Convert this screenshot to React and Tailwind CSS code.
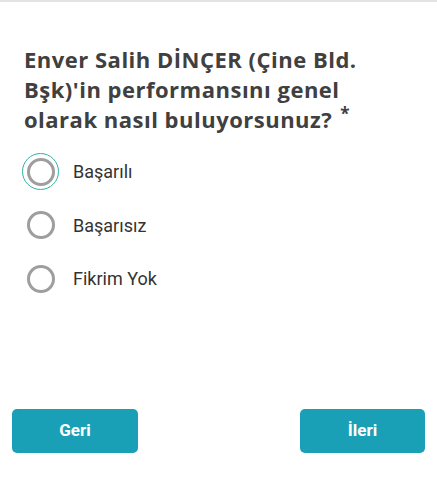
import React, { useState } from "react";

const OPTIONS = ["Başarılı", "Başarısız", "Fikrim Yok"];

const App = () => {
  const [selected, setSelected] = useState(0);

  return (
    <div className="w-[437px] h-[500px] bg-white border-t-2 border-[#e3e3e3] flex flex-col">
      <h1
        className="px-6 pt-[42px] pr-[40px] text-[22px] leading-[30px] font-bold text-[#404040] tracking-[0.5px]"
        style={{ fontFamily: "'Open Sans', sans-serif" }}
      >
        Enver Salih DİNÇER (Çine Bld. Bşk)'in performansını genel olarak nasıl buluyorsunuz?
        <span className="relative -top-2 ml-2 text-[17px] leading-none">*</span>
      </h1>

      <div
        className="flex flex-col mt-[11px] pl-[22px]"
        style={{ fontFamily: "Roboto, 'Liberation Sans', sans-serif" }}
      >
        {OPTIONS.map((opt, i) => (
          <button
            key={opt}
            onClick={() => setSelected(i)}
            className="flex items-center h-[53.5px] text-left"
          >
            <span
              className={
                "w-[37px] h-[37px] rounded-full flex items-center justify-center border-[1.5px] " +
                (selected === i ? "border-[#2fb3a3]" : "border-transparent")
              }
            >
              <span className="w-[28px] h-[28px] rounded-full border-[3px] border-[#9e9e9e]" />
            </span>
            <span className="ml-[14px] text-[18px] text-[#333333]">{opt}</span>
          </button>
        ))}
      </div>

      <div
        className="mt-auto mb-[47px] flex justify-between px-3"
        style={{ fontFamily: "Roboto, 'Liberation Sans', sans-serif" }}
      >
        <button className="w-[126px] h-[44px] rounded-[5px] bg-[#1aa0b6] text-white font-bold text-[17px]">
          Geri
        </button>
        <button className="w-[125px] h-[44px] rounded-[5px] bg-[#1aa0b6] text-white font-bold text-[17px]">
          İleri
        </button>
      </div>
    </div>
  );
};

export default App;
